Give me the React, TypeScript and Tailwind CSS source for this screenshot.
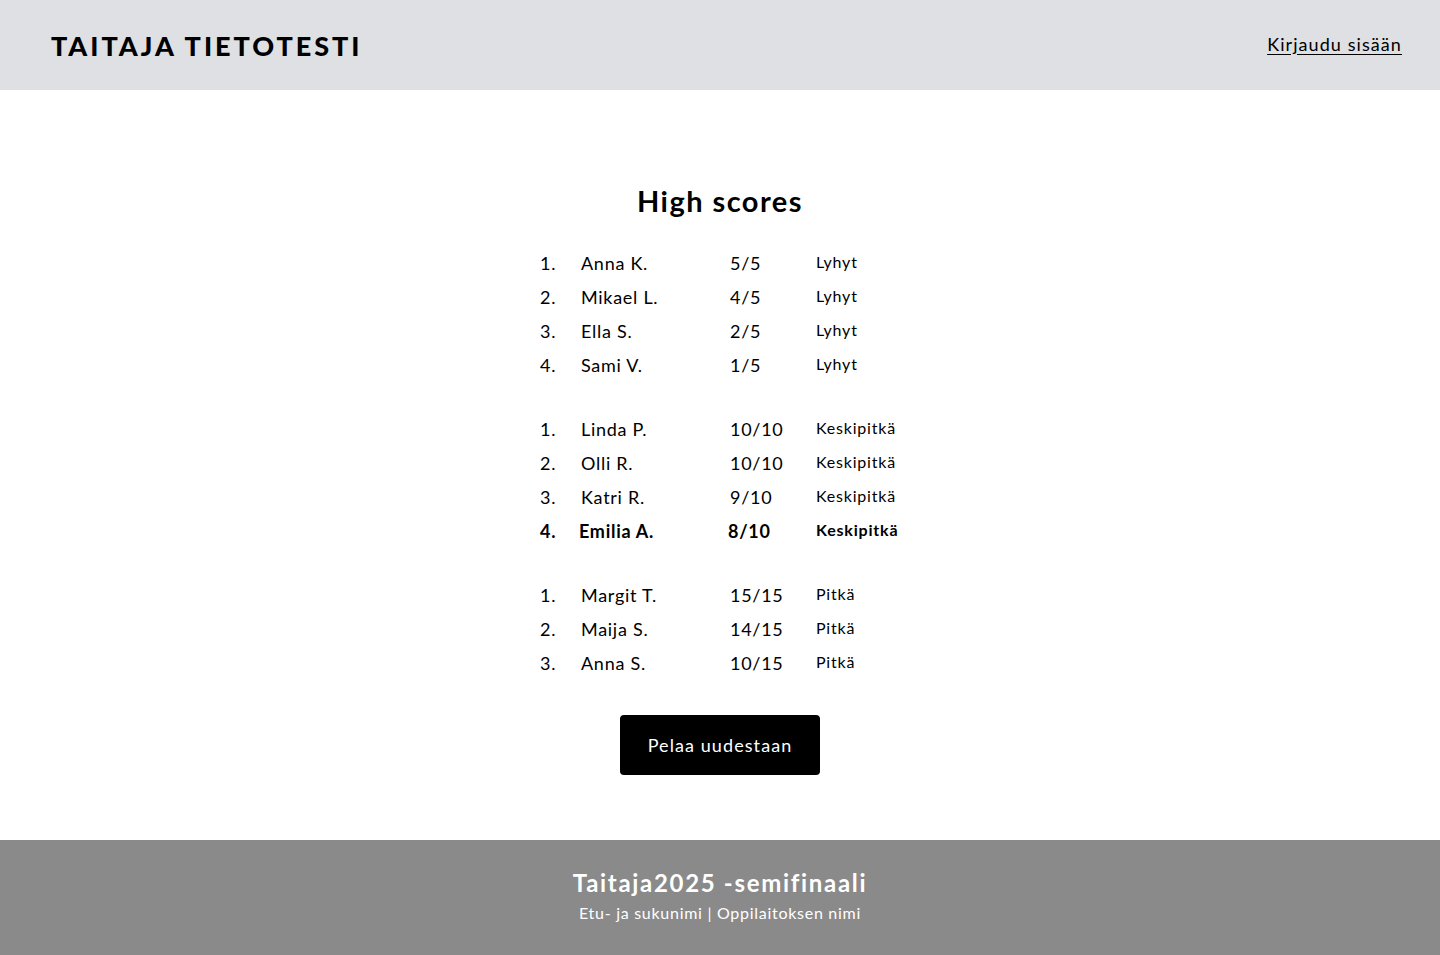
import React from 'react'

type Row = { rank: string; name: string; score: string; mode: string; bold?: boolean }

const groups: Row[][] = [
  [
    { rank: '1.', name: 'Anna K.', score: '5/5', mode: 'Lyhyt' },
    { rank: '2.', name: 'Mikael L.', score: '4/5', mode: 'Lyhyt' },
    { rank: '3.', name: 'Ella S.', score: '2/5', mode: 'Lyhyt' },
    { rank: '4.', name: 'Sami V.', score: '1/5', mode: 'Lyhyt' },
  ],
  [
    { rank: '1.', name: 'Linda P.', score: '10/10', mode: 'Keskipitkä' },
    { rank: '2.', name: 'Olli R.', score: '10/10', mode: 'Keskipitkä' },
    { rank: '3.', name: 'Katri R.', score: '9/10', mode: 'Keskipitkä' },
    { rank: '4.', name: 'Emilia A.', score: '8/10', mode: 'Keskipitkä', bold: true },
  ],
  [
    { rank: '1.', name: 'Margit T.', score: '15/15', mode: 'Pitkä' },
    { rank: '2.', name: 'Maija S.', score: '14/15', mode: 'Pitkä' },
    { rank: '3.', name: 'Anna S.', score: '10/15', mode: 'Pitkä' },
  ],
]

export default function App() {
  return (
    <div className="min-h-screen flex flex-col bg-white text-black font-['Lato','Noto_Sans',sans-serif]">
      {/* Header */}
      <header className="h-[90px] bg-[#dfe0e3] flex items-center justify-between pl-[51px] pr-[38px] shrink-0">
        <h1 className="text-[27px] font-black tracking-[0.11em] pt-[2px]">TAITAJA TIETOTESTI</h1>
        <a href="#" className="text-[18px] underline underline-offset-[3px] tracking-[0.06em] -mt-[2px]">Kirjaudu sisään</a>
      </header>

      {/* Main */}
      <main className="flex-1 flex flex-col items-center pt-[93px] pb-[65px]">
        <h2 className="text-[29px] font-bold leading-[36px] tracking-[0.05em]">High scores</h2>

        <div className="mt-[27px] w-[362px] pl-[1px] flex flex-col gap-[30px]">
          {groups.map((g, gi) => (
            <div key={gi} className="flex flex-col">
              {g.map((r, ri) => (
                <div
                  key={ri}
                  className={
                    'grid grid-cols-[41px_149px_86px_86px] h-[34px] items-center ' +
                    (r.bold ? 'font-bold' : '')
                  }
                >
                  <span className="text-[18px] tracking-[0.04em]">{r.rank}</span>
                  <span className={'text-[18px] tracking-[0.04em] ' + (r.bold ? '-ml-[2px]' : '')}>{r.name}</span>
                  <span className={'text-[18px] tracking-[0.04em] ' + (r.bold ? '-ml-[2px]' : '')}>{r.score}</span>
                  <span className="text-[16px] tracking-[0.05em] -mt-[3px] whitespace-nowrap">{r.mode}</span>
                </div>
              ))}
            </div>
          ))}
        </div>

        <button className="mt-[35px] w-[200px] h-[60px] bg-black text-white rounded-[4px] text-[18px] tracking-[0.06em]">
          Pelaa uudestaan
        </button>
      </main>

      {/* Footer */}
      <footer className="h-[115px] bg-[#8a8a8a] text-white flex flex-col items-center pt-[27px] shrink-0">
        <p className="text-[24px] font-bold leading-[32px] tracking-[0.07em]">Taitaja2025 -semifinaali</p>
        <p className="text-[16px] leading-[22px] mt-[3px] tracking-[0.045em]">Etu- ja sukunimi | Oppilaitoksen nimi</p>
      </footer>
    </div>
  )
}
